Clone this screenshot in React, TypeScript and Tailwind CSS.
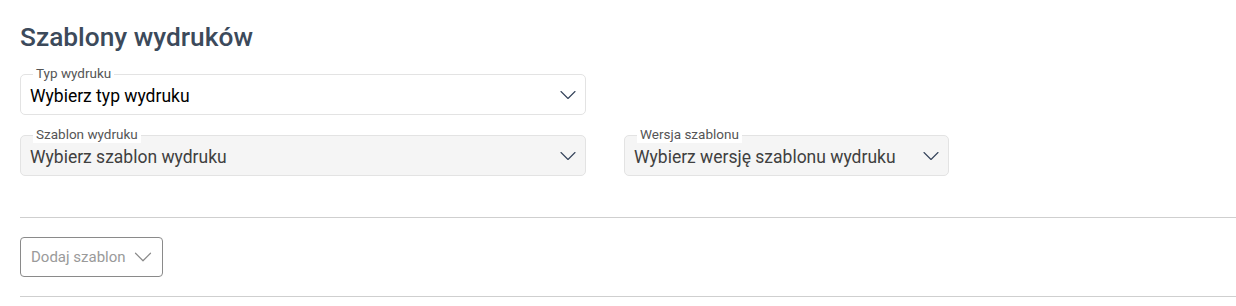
import { ChevronDown } from "lucide-react";

type FieldProps = {
  label: string;
  value: string;
  disabled?: boolean;
  className?: string;
};

function SelectField({ label, value, disabled, className }: FieldProps) {
  return (
    <div
      className={
        "relative flex h-[41px] items-center justify-between rounded-[5px] border border-[#e3e3e3] pl-[9px] pr-[3px] " +
        (disabled ? "bg-[#f5f5f5] text-[#404040]" : "bg-white text-black") +
        " " +
        (className ?? "")
      }
    >
      <span className="absolute left-[12px] top-[-10px] bg-white px-[3px] text-[13.5px] leading-[17px] text-[#555]">
        {label}
      </span>
      <span className="pt-[3px] text-[17.5px] leading-[22px]">{value}</span>
      <ChevronDown className="h-[28px] w-[28px] text-[#34435a]" strokeWidth={0.95} />
    </div>
  );
}

export default function App() {
  return (
    <div className="min-h-[306px] bg-white pl-5 pt-[20px] font-['Roboto',sans-serif]">
      <h1 className="text-[26.3px] font-medium leading-[34px] text-[#3c4a5b]">Szablony wydruków</h1>

      <div className="mt-[20px] flex flex-col gap-[20px]">
        <SelectField label="Typ wydruku" value="Wybierz typ wydruku" className="w-[566px]" />
        <div className="flex gap-[38px]">
          <SelectField label="Szablon wydruku" value="Wybierz szablon wydruku" disabled className="w-[566px]" />
          <SelectField label="Wersja szablonu" value="Wybierz wersję szablonu wydruku" disabled className="w-[325px]" />
        </div>
      </div>

      <div className="mt-[41px] border-t border-[#cfcfcf]" />

      <div className="py-[19px]">
        <button className="flex h-[40px] w-[143px] items-center gap-[2px] rounded-[4px] border border-[#8a8a8a] pl-[10px] text-[15px] text-[#9a9a9a]">
          Dodaj szablon
          <ChevronDown className="h-[30px] w-[30px] text-[#8a8a8a]" strokeWidth={0.95} />
        </button>
      </div>

      <div className="border-t border-[#cfcfcf]" />
    </div>
  );
}
